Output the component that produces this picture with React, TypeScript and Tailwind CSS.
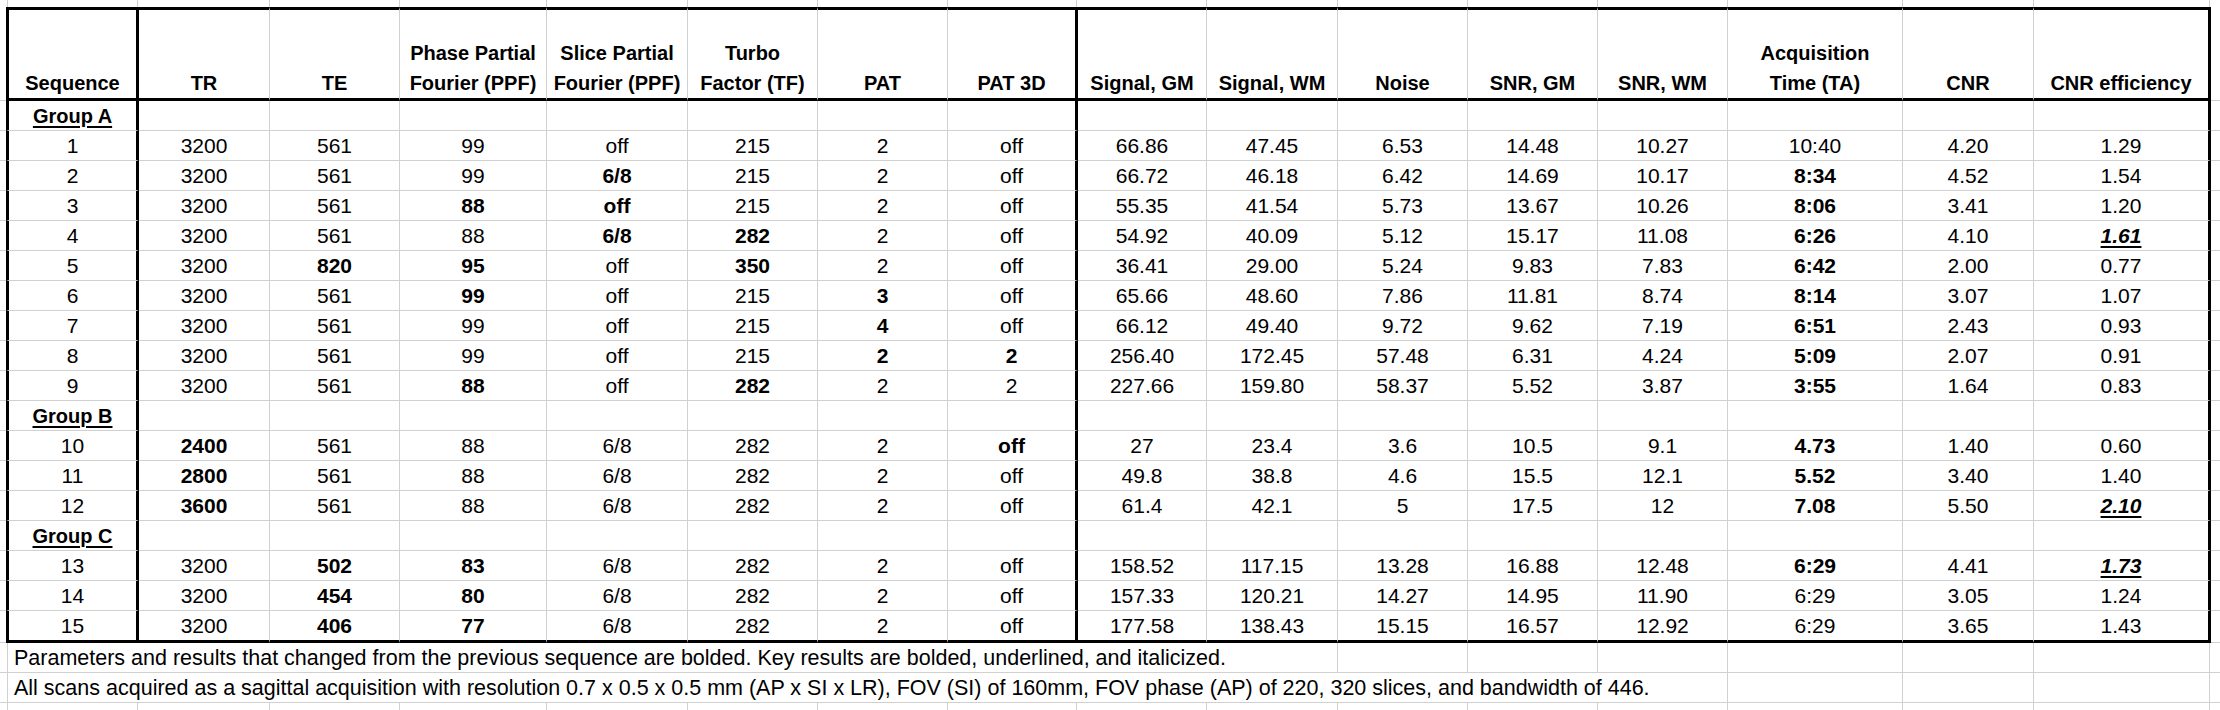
import React from 'react';

// column widths: rows inside the bordered table, and plain sheet rows outside it
const tableW = [
  'w-[133px]', 'w-[131px]', 'w-[130px]', 'w-[147px]', 'w-[141px]', 'w-[130px]', 'w-[130px]', 'w-[130px]',
  'w-[129px]', 'w-[131px]', 'w-[130px]', 'w-[130px]', 'w-[130px]', 'w-[175px]', 'w-[131px]', 'w-[177px]',
];
const plainW = [
  'w-[130px]', 'w-[132px]', 'w-[130px]', 'w-[147px]', 'w-[141px]', 'w-[130px]', 'w-[130px]', 'w-[129px]',
  'w-[130px]', 'w-[131px]', 'w-[130px]', 'w-[130px]', 'w-[130px]', 'w-[175px]', 'w-[131px]', 'w-[176px]',
];

const headers: string[][] = [
  ['Sequence'],
  ['TR'],
  ['TE'],
  ['Phase Partial', 'Fourier (PPF)'],
  ['Slice Partial', 'Fourier (PPF)'],
  ['Turbo', 'Factor (TF)'],
  ['PAT'],
  ['PAT 3D'],
  ['Signal, GM'],
  ['Signal, WM'],
  ['Noise'],
  ['SNR, GM'],
  ['SNR, WM'],
  ['Acquisition', 'Time (TA)'],
  ['CNR'],
  ['CNR efficiency'],
];

// "*" = bolded (changed), "!" = key result (bold, italic, underlined)
type Row = { group: string } | { values: string[] };

const rows: Row[] = [
  { group: 'Group A' },
  { values: ['1', '3200', '561', '99', 'off', '215', '2', 'off', '66.86', '47.45', '6.53', '14.48', '10.27', '10:40', '4.20', '1.29'] },
  { values: ['2', '3200', '561', '99', '*6/8', '215', '2', 'off', '66.72', '46.18', '6.42', '14.69', '10.17', '*8:34', '4.52', '1.54'] },
  { values: ['3', '3200', '561', '*88', '*off', '215', '2', 'off', '55.35', '41.54', '5.73', '13.67', '10.26', '*8:06', '3.41', '1.20'] },
  { values: ['4', '3200', '561', '88', '*6/8', '*282', '2', 'off', '54.92', '40.09', '5.12', '15.17', '11.08', '*6:26', '4.10', '!1.61'] },
  { values: ['5', '3200', '*820', '*95', 'off', '*350', '2', 'off', '36.41', '29.00', '5.24', '9.83', '7.83', '*6:42', '2.00', '0.77'] },
  { values: ['6', '3200', '561', '*99', 'off', '215', '*3', 'off', '65.66', '48.60', '7.86', '11.81', '8.74', '*8:14', '3.07', '1.07'] },
  { values: ['7', '3200', '561', '99', 'off', '215', '*4', 'off', '66.12', '49.40', '9.72', '9.62', '7.19', '*6:51', '2.43', '0.93'] },
  { values: ['8', '3200', '561', '99', 'off', '215', '*2', '*2', '256.40', '172.45', '57.48', '6.31', '4.24', '*5:09', '2.07', '0.91'] },
  { values: ['9', '3200', '561', '*88', 'off', '*282', '2', '2', '227.66', '159.80', '58.37', '5.52', '3.87', '*3:55', '1.64', '0.83'] },
  { group: 'Group B' },
  { values: ['10', '*2400', '561', '88', '6/8', '282', '2', '*off', '27', '23.4', '3.6', '10.5', '9.1', '*4.73', '1.40', '0.60'] },
  { values: ['11', '*2800', '561', '88', '6/8', '282', '2', 'off', '49.8', '38.8', '4.6', '15.5', '12.1', '*5.52', '3.40', '1.40'] },
  { values: ['12', '*3600', '561', '88', '6/8', '282', '2', 'off', '61.4', '42.1', '5', '17.5', '12', '*7.08', '5.50', '!2.10'] },
  { group: 'Group C' },
  { values: ['13', '3200', '*502', '*83', '6/8', '282', '2', 'off', '158.52', '117.15', '13.28', '16.88', '12.48', '*6:29', '4.41', '!1.73'] },
  { values: ['14', '3200', '*454', '*80', '6/8', '282', '2', 'off', '157.33', '120.21', '14.27', '14.95', '11.90', '6:29', '3.05', '1.24'] },
  { values: ['15', '3200', '*406', '*77', '6/8', '282', '2', 'off', '177.58', '138.43', '15.15', '16.57', '12.92', '6:29', '3.65', '1.43'] },
];

function sideBorders(i: number): string {
  if (i === 0) return 'border-l-[3px] border-l-black border-r-[3px] border-r-black';
  if (i === 7 || i === 15) return 'border-r-[3px] border-r-black';
  return 'border-r border-r-[#d0d0d0]';
}

const Value = ({ v }: { v: string }) => {
  if (v.startsWith('!'))
    return <span className="font-bold italic underline decoration-2 underline-offset-[3px]">{v.slice(1)}</span>;
  if (v.startsWith('*')) return <span className="font-bold">{v.slice(1)}</span>;
  return <span>{v}</span>;
};

// row of empty spreadsheet cells outside the table
const PlainCells = ({ from = 0 }: { from?: number }) => (
  <>
    {plainW.slice(from).map((w, i) => (
      <div key={i} className={`${w} shrink-0 border-r border-b border-[#d0d0d0]`} />
    ))}
    <div className="flex-1 border-b border-[#d0d0d0]" />
  </>
);

const App = () => {
  return (
    <div className="h-[710px] w-[2220px] overflow-hidden bg-white font-['Liberation_Sans',Arial,sans-serif] text-black">
      {/* partial row above the table */}
      <div className="flex h-[7px]">
        <div className="w-[8px] shrink-0 border-r border-[#d0d0d0]" />
        {plainW.map((w, i) => (
          <div key={i} className={`${w} shrink-0 border-r border-[#d0d0d0]`} />
        ))}
        <div className="flex-1" />
      </div>

      {/* header */}
      <div className="flex h-[94px]">
        <div className="w-[6px] shrink-0 border-b border-[#d0d0d0]" />
        {headers.map((lines, i) => (
          <div
            key={i}
            className={`${tableW[i]} flex shrink-0 flex-col items-center justify-end border-t-[3px] border-b-[3px] border-t-black border-b-black ${sideBorders(i)} text-center text-[20px] font-bold leading-[30px]`}
          >
            {lines.map((l) => (
              <div key={l} className="whitespace-nowrap">
                {l}
              </div>
            ))}
          </div>
        ))}
        <div className="flex-1 border-b border-[#d0d0d0]" />
      </div>

      {/* body */}
      {rows.map((row, r) => {
        const last = r === rows.length - 1;
        const bottom = last ? 'border-b-[3px] border-b-black' : 'border-b border-b-[#d0d0d0]';
        return (
          <div key={r} className={`flex ${last ? 'h-[32px]' : 'h-[30px]'}`}>
            <div className="w-[6px] shrink-0 border-b border-[#d0d0d0]" />
            {tableW.map((w, i) => {
              let content: React.ReactNode = null;
              if ('group' in row) {
                if (i === 0)
                  content = (
                    <span className="text-[20px] font-bold underline decoration-2 underline-offset-[3px]">{row.group}</span>
                  );
              } else {
                content = <Value v={row.values[i]} />;
              }
              return (
                <div
                  key={i}
                  className={`${w} flex shrink-0 items-center justify-center whitespace-nowrap ${sideBorders(i)} ${bottom} text-[21px] leading-[24px]`}
                >
                  {content}
                </div>
              );
            })}
            <div className="flex-1 border-b border-[#d0d0d0]" />
          </div>
        );
      })}

      {/* notes */}
      <div className="flex h-[30px]">
        <div className="w-[8px] shrink-0 border-r border-b border-[#d0d0d0]" />
        <div className="flex w-[1330px] shrink-0 items-center whitespace-nowrap border-r border-b border-[#d0d0d0] pl-[6px] text-[21.5px] leading-[24px]">
          Parameters and results that changed from the previous sequence are bolded. Key results are bolded, underlined, and italicized.
        </div>
        <PlainCells from={10} />
      </div>
      <div className="flex h-[30px]">
        <div className="w-[8px] shrink-0 border-r border-b border-[#d0d0d0]" />
        <div className="flex w-[1720px] shrink-0 items-center whitespace-nowrap border-r border-b border-[#d0d0d0] pl-[6px] text-[21.5px] leading-[24px]">
          All scans acquired as a sagittal acquisition with resolution 0.7 x 0.5 x 0.5 mm (AP x SI x LR), FOV (SI) of 160mm, FOV phase (AP) of 220, 320 slices, and bandwidth of 446.
        </div>
        <PlainCells from={13} />
      </div>
      <div className="flex h-[8px]">
        <div className="w-[8px] shrink-0 border-r border-[#d0d0d0]" />
        {plainW.map((w, i) => (
          <div key={i} className={`${w} shrink-0 border-r border-[#d0d0d0]`} />
        ))}
        <div className="flex-1" />
      </div>
    </div>
  );
};

export default App;
